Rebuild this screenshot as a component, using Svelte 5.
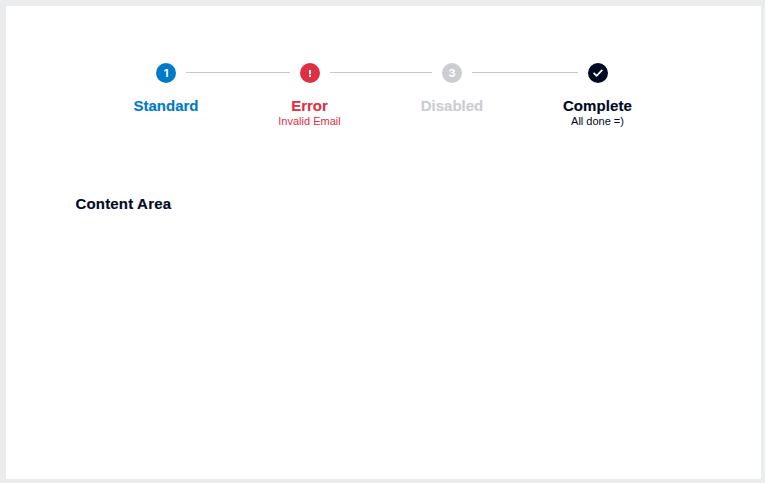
<script>
  const steps = [
    { kind: 'standard', mark: '1', title: 'Standard', note: '', width: 144 },
    { kind: 'error', mark: '!', title: 'Error', note: 'Invalid Email', width: 143 },
    { kind: 'disabled', mark: '3', title: 'Disabled', note: '', width: 142 },
    { kind: 'complete', mark: '', title: 'Complete', note: 'All done =)', width: 149 }
  ];
</script>

<main>
  <ol class="stepper">
    {#each steps as step}
      <li class={step.kind} style:width="{step.width}px">
        <div class="track">
          <i class="before"></i>
          <span class="dot">
            {#if step.kind === 'complete'}
              <svg width="20" height="20" viewBox="0 0 20 20"><path d="M5.6 9.9 8.6 12.9 14.3 6.8" /></svg>
            {:else if step.kind === 'error'}
              <svg width="20" height="20" viewBox="0 0 20 20"><path class="bar" d="M9 7h2v4.2H9zM9 12h2v2H9z" /></svg>
            {:else}{step.mark}{/if}
          </span>
          <i class="after"></i>
        </div>
        <strong>{step.title}</strong>
        {#if step.note}<small>{step.note}</small>{/if}
      </li>
    {/each}
  </ol>
  <h2>Content Area</h2>
</main>

<style>
  :global(body) { background: #ebecee; }
  main {
    box-sizing: border-box;
    width: 755px;
    height: 473px;
    margin: 6px 4px 4px 6px;
    padding: 57px 0 0;
    overflow: hidden;
    background: #fff;
    font-family: "Liberation Sans", Arial, sans-serif;
    color: #000a23;
  }
  .stepper { display: flex; margin: 0; padding: 0 0 0 88px; height: 131px; list-style: none; }
  li { display: flex; flex-direction: column; align-items: center; flex: none; }
  .track { display: flex; align-items: center; width: 100%; height: 20px; }
  .track i { flex: 1; height: 1px; margin-bottom: 1px; background: #c7c8cc; }
  .track .before { margin-right: 10px; }
  .track .after { margin-left: 10px; }
  li:first-child .before, li:last-child .after { visibility: hidden; }
  .dot {
    flex: none;
    width: 20px;
    height: 20px;
    border-radius: 50%;
    background: currentColor;
    font-family: Inter, "Liberation Sans", sans-serif;
    font-size: 11px;
    font-weight: 700;
    line-height: 20px;
    text-align: center;
    -webkit-text-fill-color: #fff;
  }
  svg { display: block; fill: none; stroke: #fff; stroke-width: 1.7; }
  .bar { fill: #fff; stroke: none; }
  strong { margin-top: 14px; font-size: 15px; line-height: 18px; -webkit-text-stroke: 0.15px; }
  small { font-size: 11px; line-height: 13px; }
  .standard { color: #007ac9; }
  .error { color: #de2f44; }
  .disabled { color: #cccdd1; }
  .complete strong { letter-spacing: 0.1px; }
  h2 { margin: 0 0 0 69.5px; font-size: 15px; line-height: 20px; letter-spacing: 0.17px; -webkit-text-stroke: 0.15px; }
</style>
